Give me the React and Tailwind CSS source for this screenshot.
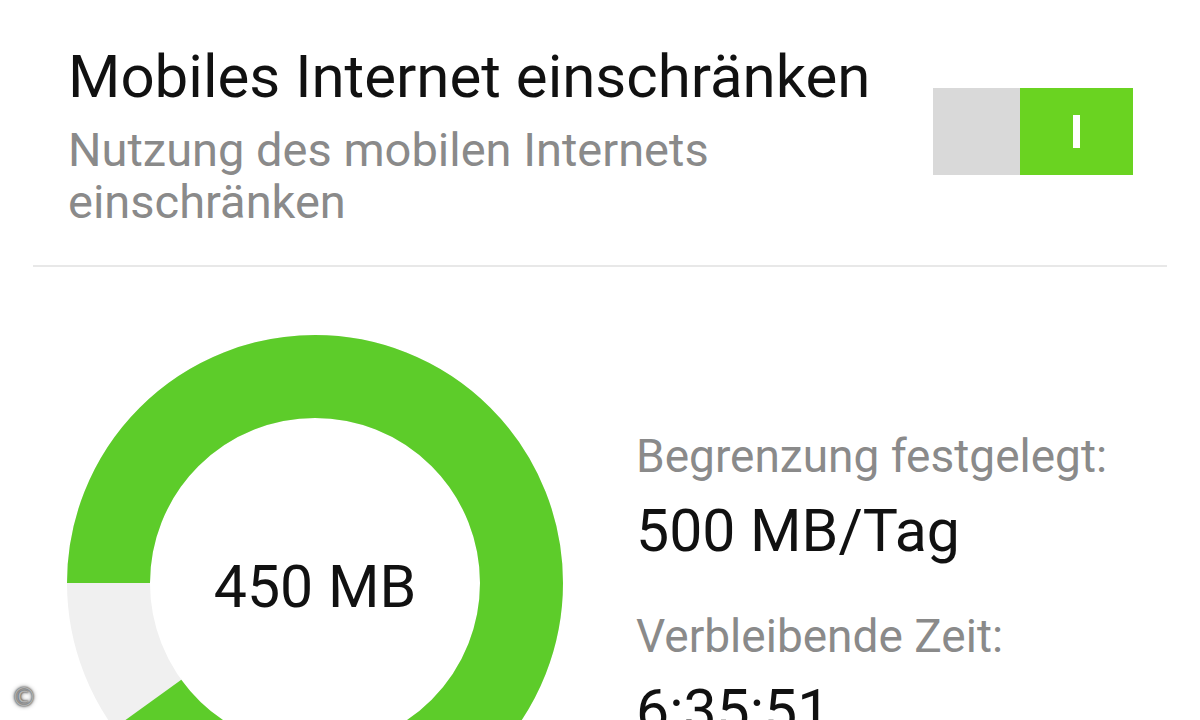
import React from "react";

const FONT = { fontFamily: "Roboto, 'Noto Sans', Arial, sans-serif" };

function Toggle({ on }) {
  return (
    <div className="flex h-[87px] w-[200px] shrink-0 mt-[47px]">
      <div className="w-[87px] h-full bg-[#d9d9d9]" />
      <div className="flex-1 h-full bg-[#6ad321] flex items-center justify-center">
        {on && <div className="w-[7px] h-[33px] bg-white" />}
      </div>
    </div>
  );
}

function Donut({ used, limit }) {
  const size = 496;
  const stroke = 83;
  const r = (size - stroke) / 2;
  const c = 2 * Math.PI * r;
  const frac = used / limit;

  return (
    <div className="relative w-[496px] h-[496px] shrink-0">
      <svg width={size} height={size} viewBox={`0 0 ${size} ${size}`}>
        <circle cx={size / 2} cy={size / 2} r={r} fill="none" stroke="#f0f0f0" strokeWidth={stroke} />
        <circle
          cx={size / 2}
          cy={size / 2}
          r={r}
          fill="none"
          stroke="#5dcc2a"
          strokeWidth={stroke}
          strokeDasharray={`${c * frac} ${c}`}
          transform={`rotate(180 ${size / 2} ${size / 2})`}
        />
      </svg>
      <div className="absolute inset-0 flex items-center justify-center">
        <span className="relative top-[4px] text-[59px] leading-[64px] text-[#111]">{used} MB</span>
      </div>
    </div>
  );
}

export default function App() {
  return (
    <div className="relative w-[1200px] h-[720px] overflow-hidden bg-white" style={FONT}>
      <div className="flex justify-between pl-[68px] pr-[67px] pt-[41px]">
        <div>
          <h1 className="text-[60px] leading-[72px] text-[#111] font-normal">Mobiles Internet einschränken</h1>
          <p className="mt-[11px] text-[47px] leading-[52px] text-[#8a8a8a]">
            Nutzung des mobilen Internets
            <br />
            einschränken
          </p>
        </div>
        <Toggle on />
      </div>

      <div className="mx-[33px] mt-[37px] h-[2px] bg-[#e8e8e8]" />

      <div className="flex pl-[67px] mt-[68px] gap-[73px]">
        <Donut used={450} limit={500} />
        <div className="mt-[95px]">
          <div className="text-[46px] leading-[52px] text-[#8a8a8a]">Begrenzung festgelegt:</div>
          <div className="mt-[13px] text-[59px] leading-[72px] text-[#111]">500 MB/Tag</div>
          <div className="mt-[43px] text-[46px] leading-[52px] text-[#8a8a8a]">Verbleibende Zeit:</div>
          <div className="mt-[13px] text-[59px] leading-[72px] text-[#111]">6:35:51</div>
        </div>
      </div>

      <div
        className="absolute left-[11px] top-[684px] text-[26px] leading-[26px] text-[#b0b0b0]"
        style={{ fontFamily: "'DejaVu Sans', sans-serif", textShadow: "0 0 2px #222, 0 0 4px #555" }}
      >
        ©
      </div>
    </div>
  );
}
